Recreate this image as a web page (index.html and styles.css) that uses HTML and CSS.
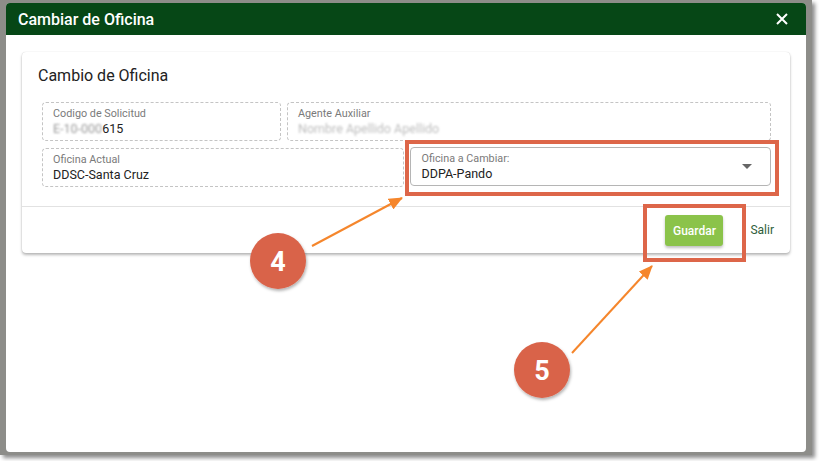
FILE: index.html
```html
<!DOCTYPE html>
<html lang="es">
<head>
<meta charset="utf-8">
<title>Cambiar de Oficina</title>
<link rel="stylesheet" href="styles.css">
</head>
<body>
<div class="screen">
  <div class="dialog">
    <div class="dialog-header">
      <span class="dialog-title">Cambiar de Oficina</span>
      <svg class="close" width="12" height="12" viewBox="0 0 12 12"><path d="M1 1 L11 11 M11 1 L1 11" stroke="#fff" stroke-width="2" fill="none"/></svg>
    </div>
    <div class="dialog-body">
      <div class="card">
        <div class="card-main">
          <div class="card-title">Cambio de Oficina</div>
          <div class="fields">
            <div class="field span4">
              <div class="label">Codigo de Solicitud</div>
              <div class="value"><span class="blur">E-10-000</span>615</div>
            </div>
            <div class="field span8">
              <div class="label">Agente Auxiliar</div>
              <div class="value"><span class="blur light">Nombre Apellido Apellido</span></div>
            </div>
            <div class="field span6">
              <div class="label">Oficina Actual</div>
              <div class="value">DDSC-Santa Cruz</div>
            </div>
            <div class="field select span6">
              <div class="label">Oficina a Cambiar:</div>
              <div class="value">DDPA-Pando</div>
              <span class="caret"></span>
            </div>
          </div>
        </div>
        <div class="card-actions">
          <button class="btn-save">Guardar</button>
          <span class="btn-exit">Salir</span>
        </div>
      </div>
    </div>
  </div>
  <svg class="annotations" width="819" height="461" viewBox="0 0 819 461">
    <defs>
      <marker id="ah2" markerWidth="14" markerHeight="12" refX="13" refY="6" orient="auto" markerUnits="userSpaceOnUse">
        <path d="M0 0 L14 6 L0 12 Z" fill="#f5862c"/>
      </marker>
      <filter id="sh" x="-30%" y="-30%" width="160%" height="160%">
        <feDropShadow dx="1" dy="2" stdDeviation="1.5" flood-color="#000" flood-opacity="0.3"/>
      </filter>
    </defs>
    <rect x="407" y="142" width="370" height="52" fill="none" stroke="#dd6649" stroke-width="4"/>
    <rect x="645" y="206" width="99" height="54" fill="none" stroke="#dd6649" stroke-width="4"/>
    <line x1="312" y1="246" x2="402" y2="198" stroke="#f5862c" stroke-width="2" marker-end="url(#ah2)"/>
    <line x1="572" y1="353" x2="652" y2="266" stroke="#f5862c" stroke-width="2" marker-end="url(#ah2)"/>
    <circle cx="278" cy="261" r="28" fill="#d9634a" filter="url(#sh)"/>
    <text x="278" y="271" class="num" text-anchor="middle">4</text>
    <circle cx="542" cy="370" r="28" fill="#d9634a" filter="url(#sh)"/>
    <text x="542" y="380" class="num" text-anchor="middle">5</text>
  </svg>
</div>
</body>
</html>
```
FILE: styles.css
```css
* { box-sizing: border-box; }
html, body { margin: 0; padding: 0; }
body {
  background: #ffffff;
  font-family: Roboto, "Liberation Sans", Arial, sans-serif;
  width: 819px;
  height: 461px;
  overflow: hidden;
}
.screen {
  position: relative;
  width: 812px;
  height: 455px;
  background: #8d8d89;
  box-shadow: 3px 3px 4px rgba(0,0,0,0.45);
  padding: 3px 0 0 6px;
}
.dialog {
  width: 800px;
  height: 449px;
  background: #fff;
  border-radius: 4px;
  overflow: hidden;
  display: flex;
  flex-direction: column;
}
.dialog-header {
  height: 32px;
  background: #064716;
  display: flex;
  align-items: center;
  justify-content: space-between;
  padding: 0 18px 0 12px;
}
.dialog-title {
  color: #fff;
  font-size: 16px;
  font-weight: 500;
}
.close { display: block; }
.dialog-body {
  padding: 17px 16px 0 16px;
}
.card {
  background: #fff;
  border-radius: 4px;
  box-shadow: 0 2px 3px rgba(0,0,0,0.28), 0 0 1px rgba(0,0,0,0.2);
}
.card-main {
  padding: 14px 19px 19px 16px;
}
.card-title {
  font-size: 16px;
  color: #222;
  line-height: 20px;
  height: 20px;
  margin-bottom: 16px;
}
.fields {
  display: grid;
  grid-template-columns: repeat(12, 1fr);
  column-gap: 6px;
  row-gap: 7px;
  padding-left: 4px;
}
.span4 { grid-column: span 4; }
.span8 { grid-column: span 8; }
.span6 { grid-column: span 6; }
.field {
  position: relative;
  height: 39px;
  border: 1px dashed #c4c4c4;
  border-radius: 4px;
  padding: 4px 10px 0 10px;
}
.field.select {
  border: 1px solid #b5b5b5;
  margin-top: -1px;
  padding-left: 11px;
}
.label {
  font-size: 10.8px;
  line-height: 13px;
  color: #7a7a7a;
}
.value {
  font-size: 12.5px;
  line-height: 17px;
  color: #222;
}
.blur {
  color: #9a9a9a;
  filter: blur(1.3px);
}
.blur.light { color: #bdbdbd; }
.caret {
  position: absolute;
  right: 18px;
  top: 16px;
  width: 0;
  height: 0;
  border-left: 5px solid transparent;
  border-right: 5px solid transparent;
  border-top: 5px solid #666;
}
.card-actions {
  border-top: 1px solid #e2e2e2;
  height: 47px;
  display: flex;
  align-items: flex-start;
  justify-content: flex-end;
  padding: 8px 16px 0 0;
}
.btn-save {
  width: 58px;
  height: 31px;
  border: none;
  border-radius: 3px;
  background: #8bc34a;
  color: #fff;
  font-family: Roboto, "Liberation Sans", Arial, sans-serif;
  font-size: 12px;
  font-weight: 500;
  box-shadow: 0 2px 3px rgba(0,0,0,0.25);
  padding: 0;
}
.btn-exit {
  margin-left: 27px;
  font-size: 12px;
  color: #2e5e3a;
  line-height: 31px;
}
.annotations {
  position: absolute;
  left: 0;
  top: 0;
  pointer-events: none;
}
.num {
  font-family: Roboto, "Liberation Sans", Arial, sans-serif;
  font-weight: 700;
  font-size: 27px;
  fill: #fff;
}
```
